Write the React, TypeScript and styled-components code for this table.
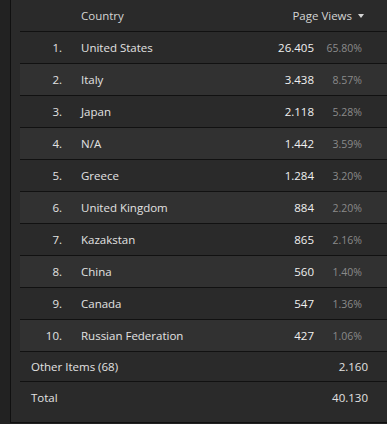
import React from "react";
import styled, { createGlobalStyle } from "styled-components";

const GlobalStyle = createGlobalStyle`
  html, body {
    margin: 0;
    padding: 0;
    background: #222222;
  }
  body {
    font-family: "Open Sans", "Noto Sans", sans-serif;
    font-size: 11.5px;
  }
`;

const Page = styled.div`
  padding-left: 10px;
  height: 424px;
  box-sizing: border-box;
`;

const Panel = styled.div`
  background: #2a2a2a;
  border-left: 1px solid #101010;
  border-bottom: 1px solid #101010;
  height: 423px;
  box-sizing: border-box;
  padding-left: 9px;
`;

const Row = styled.div<{ $alt?: boolean; $head?: boolean }>`
  display: grid;
  grid-template-columns: 42px 1fr auto 48px;
  align-items: center;
  height: 31px;
  border-bottom: 1px solid #111111;
  background: ${(p) => (p.$alt ? "#313131" : "transparent")};
  padding-right: 25px;
  color: ${(p) => (p.$head ? "#d4d4d4" : "#e2e2e2")};
`;

const Rank = styled.span`
  text-align: right;
`;

const Name = styled.span`
  padding-left: 19px;
`;

const Value = styled.span`
  text-align: right;
  color: #f0f0f0;
`;

const Pct = styled.span`
  text-align: right;
  color: #8a8a8a;
  font-size: 10.5px;
`;

const HeadSort = styled.span`
  grid-column: 3 / 5;
  display: flex;
  align-items: center;
  justify-content: flex-end;
  gap: 6px;
  margin-right: -2px;
`;

const Caret = styled.span`
  width: 0;
  height: 0;
  border-left: 3px solid transparent;
  border-right: 3px solid transparent;
  border-top: 4px solid #d4d4d4;
  margin-top: 1px;
`;

const SummaryRow = styled.div<{ $last?: boolean }>`
  display: flex;
  align-items: center;
  justify-content: space-between;
  height: ${(p) => (p.$last ? "30px" : "29px")};
  padding: 0 19px 0 11px;
  border-bottom: ${(p) => (p.$last ? "none" : "1px solid #111111")};
  color: #e2e2e2;
`;

const rows = [
  ["United States", "26.405", "65.80%"],
  ["Italy", "3.438", "8.57%"],
  ["Japan", "2.118", "5.28%"],
  ["N/A", "1.442", "3.59%"],
  ["Greece", "1.284", "3.20%"],
  ["United Kingdom", "884", "2.20%"],
  ["Kazakstan", "865", "2.16%"],
  ["China", "560", "1.40%"],
  ["Canada", "547", "1.36%"],
  ["Russian Federation", "427", "1.06%"],
];

export default function App() {
  return (
    <>
      <GlobalStyle />
      <Page>
        <Panel>
          <Row $head>
            <span />
            <Name>Country</Name>
            <HeadSort>
              Page Views
              <Caret />
            </HeadSort>
          </Row>
          {rows.map(([name, views, pct], i) => (
            <Row key={name} $alt={i % 2 === 1}>
              <Rank>{i + 1}.</Rank>
              <Name>{name}</Name>
              <Value>{views}</Value>
              <Pct>{pct}</Pct>
            </Row>
          ))}
          <SummaryRow>
            <span>Other Items (68)</span>
            <span>2.160</span>
          </SummaryRow>
          <SummaryRow $last>
            <span>Total</span>
            <span>40.130</span>
          </SummaryRow>
        </Panel>
      </Page>
    </>
  );
}
